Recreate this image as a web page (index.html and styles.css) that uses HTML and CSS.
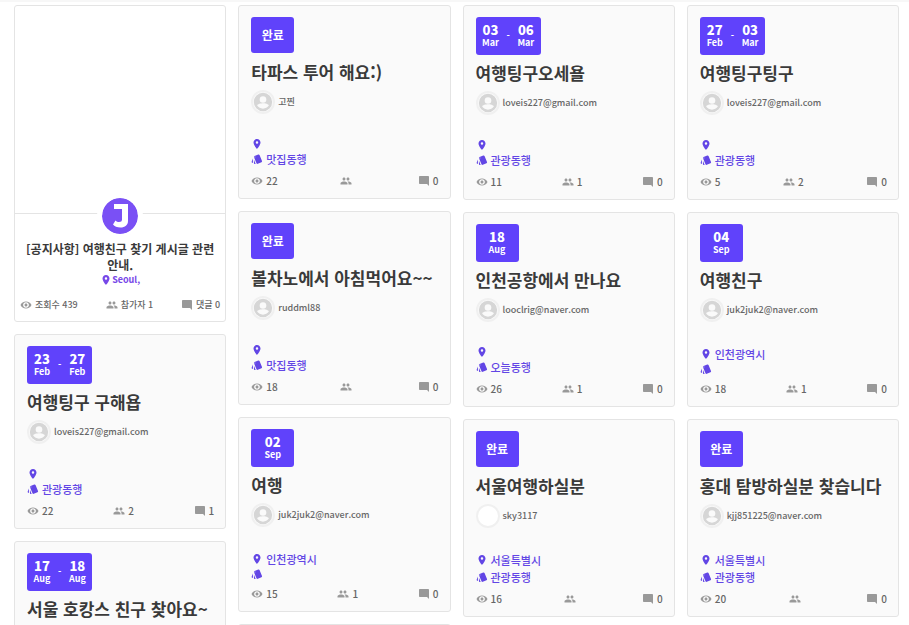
FILE: index.html
```html
<!DOCTYPE html>
<html lang="ko">
<head>
<meta charset="utf-8">
<title>여행친구 찾기</title>
<meta name="viewport" content="width=device-width, initial-scale=1">
<link rel="stylesheet" href="styles.css">
</head>
<body>
<svg class="sprite" aria-hidden="true">
  <symbol id="eye" viewBox="0 0 24 24"><path d="M12 5C7 5 2.730 7.900 1 12c1.730 4.100 6 7 11 7s9.270-2.900 11-7c-1.730-4.100-6-7-11-7zM12 17.500c-3.300 0-5.800-2.400-5.800-5.500S8.700 6.500 12 6.500s5.800 2.400 5.800 5.500-2.500 5.500-5.800 5.500zm0-8.500c-1.660 0-3 1.340-3 3s1.340 3 3 3 3-1.340 3-3-1.340-3-3-3z"/></symbol>
  <symbol id="people" viewBox="0 0 24 24"><path d="M16 11c1.660 0 2.990-1.340 2.990-3S17.660 5 16 5s-3 1.340-3 3 1.340 3 3 3zm-8 0c1.660 0 2.990-1.340 2.990-3S9.660 5 8 5 5 6.340 5 8s1.340 3 3 3zm0 2c-2.330 0-7 1.170-7 3.500V19h14v-2.500C15 14.170 10.330 13 8 13zm8 0c-.29 0-.62.02-.97.05C16.190 13.890 17 15.020 17 16.500V19h6v-2.500c0-2.330-4.670-3.500-7-3.500z"/></symbol>
  <symbol id="comment" viewBox="0 0 24 24"><path d="M22 4c0-1.100-.9-2-2-2H4c-1.100 0-2 .9-2 2v12c0 1.100.9 2 2 2h14l4 4z"/></symbol>
  <symbol id="place" viewBox="0 0 24 24"><path d="M12 2C8.130 2 5 5.130 5 9c0 5.250 7 13 7 13s7-7.750 7-13c0-3.870-3.130-7-7-7zm0 9.500a2.500 2.500 0 0 1 0-5 2.500 2.500 0 0 1 0 5z"/></symbol>
  <symbol id="style" viewBox="0 0 24 24"><path d="M2.530 19.650l1.340.56v-9.030l-2.430 5.860c-.41 1.020.08 2.190 1.090 2.610zm19.500-3.700L17.070 3.980c-.31-.75-1.040-1.210-1.810-1.230-.26 0-.53.04-.79.15L7.100 5.950c-.75.31-1.210 1.030-1.230 1.800-.01.27.04.54.15.8l4.960 11.970c.31.76 1.050 1.220 1.830 1.230.26 0 .52-.05.77-.15l7.360-3.050c1.020-.42 1.510-1.590 1.090-2.600zM7.880 8.750c-.55 0-1-.45-1-1s.45-1 1-1 1 .45 1 1-.45 1-1 1zm-2 11c0 1.100.9 2 2 2h1.450l-3.450-8.340v6.340z"/></symbol>
  <symbol id="person" viewBox="0 0 24 24"><path d="M12 1a11 11 0 1 0 0 22 11 11 0 0 0 0-22zm0 4a4 4 0 1 1 0 8 4 4 0 0 1 0-8zM12 20c-2.900 0-5.400-1.400-7-3.700.1-1.800 4.700-2.800 7-2.800s6.900 1 7 2.800c-1.600 2.300-4.100 3.700-7 3.700z"/></symbol>
</svg>

<main class="board">
  <section class="column">
    <article class="card notice">
      <div class="cover"></div>
      <svg class="logo" viewBox="0 0 36 36" role="img" aria-label="J"><circle cx="18" cy="18" r="18"/><path d="M12 6h14v17c0 4-3 6.500-7.500 6.500-3.500 0-6-1-7.500-3l2.500-4c1 1 2.300 1.500 3.500 1.500 2 0 3-.8 3-2.500V11h-8z"/></svg>
      <h2 class="notice-title"><a href="#">[공지사항] 여행친구 찾기 게시글 관련 안내.</a></h2>
      <p class="notice-place"><svg class="icon"><use href="#place"/></svg>Seoul,</p>
      <div class="stats"><span><svg class="icon"><use href="#eye"/></svg>조회수 439</span><span><svg class="icon"><use href="#people"/></svg>참가자 1</span><span><svg class="icon"><use href="#comment"/></svg>댓글 0</span></div>
    </article>
    <article class="card">
      <div class="badge"><span class="date"><b>23</b>Feb</span><span>-</span><span class="date"><b>27</b>Feb</span></div>
      <h2 class="title"><a href="#">여행팅구 구해욥</a></h2>
      <div class="user"><span class="avatar"><svg><use href="#person"/></svg></span>loveis227@gmail.com</div>
      <div class="tag empty"><svg class="icon"><use href="#place"/></svg></div>
      <div class="tag"><svg class="icon"><use href="#style"/></svg>관광동행</div>
      <div class="stats"><span><svg class="icon"><use href="#eye"/></svg>22</span><span><svg class="icon"><use href="#people"/></svg>2</span><span><svg class="icon"><use href="#comment"/></svg>1</span></div>
    </article>
    <article class="card">
      <div class="badge"><span class="date"><b>17</b>Aug</span><span>-</span><span class="date"><b>18</b>Aug</span></div>
      <h2 class="title"><a href="#">서울 호캉스 친구 찾아요~</a></h2>
    </article>
  </section>

  <section class="column">
    <article class="card">
      <div class="badge done">완료</div>
      <h2 class="title"><a href="#">타파스 투어 해요:)</a></h2>
      <div class="user"><span class="avatar"><svg><use href="#person"/></svg></span>고찐</div>
      <div class="tag empty"><svg class="icon"><use href="#place"/></svg></div>
      <div class="tag"><svg class="icon"><use href="#style"/></svg>맛집동행</div>
      <div class="stats"><span><svg class="icon"><use href="#eye"/></svg>22</span><span><svg class="icon"><use href="#people"/></svg></span><span><svg class="icon"><use href="#comment"/></svg>0</span></div>
    </article>
    <article class="card">
      <div class="badge done">완료</div>
      <h2 class="title"><a href="#">볼차노에서 아침먹어요~~</a></h2>
      <div class="user"><span class="avatar"><svg><use href="#person"/></svg></span>ruddml88</div>
      <div class="tag empty"><svg class="icon"><use href="#place"/></svg></div>
      <div class="tag"><svg class="icon"><use href="#style"/></svg>맛집동행</div>
      <div class="stats"><span><svg class="icon"><use href="#eye"/></svg>18</span><span><svg class="icon"><use href="#people"/></svg></span><span><svg class="icon"><use href="#comment"/></svg>0</span></div>
    </article>
    <article class="card">
      <div class="badge"><span class="date"><b>02</b>Sep</span></div>
      <h2 class="title"><a href="#">여행</a></h2>
      <div class="user"><span class="avatar"><svg><use href="#person"/></svg></span>juk2juk2@naver.com</div>
      <div class="tag"><svg class="icon"><use href="#place"/></svg>인천광역시</div>
      <div class="tag empty"><svg class="icon"><use href="#style"/></svg></div>
      <div class="stats"><span><svg class="icon"><use href="#eye"/></svg>15</span><span><svg class="icon"><use href="#people"/></svg>1</span><span><svg class="icon"><use href="#comment"/></svg>0</span></div>
    </article>
    <article class="card"></article>
  </section>

  <section class="column">
    <article class="card">
      <div class="badge"><span class="date"><b>03</b>Mar</span><span>-</span><span class="date"><b>06</b>Mar</span></div>
      <h2 class="title"><a href="#">여행팅구오세욜</a></h2>
      <div class="user"><span class="avatar"><svg><use href="#person"/></svg></span>loveis227@gmail.com</div>
      <div class="tag empty"><svg class="icon"><use href="#place"/></svg></div>
      <div class="tag"><svg class="icon"><use href="#style"/></svg>관광동행</div>
      <div class="stats"><span><svg class="icon"><use href="#eye"/></svg>11</span><span><svg class="icon"><use href="#people"/></svg>1</span><span><svg class="icon"><use href="#comment"/></svg>0</span></div>
    </article>
    <article class="card">
      <div class="badge"><span class="date"><b>18</b>Aug</span></div>
      <h2 class="title"><a href="#">인천공항에서 만나요</a></h2>
      <div class="user"><span class="avatar"><svg><use href="#person"/></svg></span>looclrig@naver.com</div>
      <div class="tag empty"><svg class="icon"><use href="#place"/></svg></div>
      <div class="tag"><svg class="icon"><use href="#style"/></svg>오늘동행</div>
      <div class="stats"><span><svg class="icon"><use href="#eye"/></svg>26</span><span><svg class="icon"><use href="#people"/></svg>1</span><span><svg class="icon"><use href="#comment"/></svg>0</span></div>
    </article>
    <article class="card">
      <div class="badge done">완료</div>
      <h2 class="title"><a href="#">서울여행하실분</a></h2>
      <div class="user"><span class="avatar blank"></span>sky3117</div>
      <div class="tag"><svg class="icon"><use href="#place"/></svg>서울특별시</div>
      <div class="tag"><svg class="icon"><use href="#style"/></svg>관광동행</div>
      <div class="stats"><span><svg class="icon"><use href="#eye"/></svg>16</span><span><svg class="icon"><use href="#people"/></svg></span><span><svg class="icon"><use href="#comment"/></svg>0</span></div>
    </article>
  </section>

  <section class="column">
    <article class="card">
      <div class="badge"><span class="date"><b>27</b>Feb</span><span>-</span><span class="date"><b>03</b>Mar</span></div>
      <h2 class="title"><a href="#">여행팅구팅구</a></h2>
      <div class="user"><span class="avatar"><svg><use href="#person"/></svg></span>loveis227@gmail.com</div>
      <div class="tag empty"><svg class="icon"><use href="#place"/></svg></div>
      <div class="tag"><svg class="icon"><use href="#style"/></svg>관광동행</div>
      <div class="stats"><span><svg class="icon"><use href="#eye"/></svg>5</span><span><svg class="icon"><use href="#people"/></svg>2</span><span><svg class="icon"><use href="#comment"/></svg>0</span></div>
    </article>
    <article class="card">
      <div class="badge"><span class="date"><b>04</b>Sep</span></div>
      <h2 class="title"><a href="#">여행친구</a></h2>
      <div class="user"><span class="avatar"><svg><use href="#person"/></svg></span>juk2juk2@naver.com</div>
      <div class="tag"><svg class="icon"><use href="#place"/></svg>인천광역시</div>
      <div class="tag empty"><svg class="icon"><use href="#style"/></svg></div>
      <div class="stats"><span><svg class="icon"><use href="#eye"/></svg>18</span><span><svg class="icon"><use href="#people"/></svg>1</span><span><svg class="icon"><use href="#comment"/></svg>0</span></div>
    </article>
    <article class="card">
      <div class="badge done">완료</div>
      <h2 class="title"><a href="#">홍대 탐방하실분 찾습니다</a></h2>
      <div class="user"><span class="avatar"><svg><use href="#person"/></svg></span>kjj851225@naver.com</div>
      <div class="tag"><svg class="icon"><use href="#place"/></svg>서울특별시</div>
      <div class="tag"><svg class="icon"><use href="#style"/></svg>관광동행</div>
      <div class="stats"><span><svg class="icon"><use href="#eye"/></svg>20</span><span><svg class="icon"><use href="#people"/></svg></span><span><svg class="icon"><use href="#comment"/></svg>0</span></div>
    </article>
  </section>
</main>
</body>
</html>
```
FILE: styles.css
```css
* { box-sizing: border-box; }

body {
  margin: 0;
  background: #fff;
  color: #666;
  font-family: "Noto Sans CJK KR", sans-serif;
  font-weight: 500;
}

a { color: inherit; text-decoration: none; }

.sprite { display: none; }

.board {
  display: grid;
  grid-template-columns: repeat(4, minmax(0, 1fr));
  gap: 12px;
  height: 100vh;
  padding: 3px 10px 0 14px;
  border-top: 2px solid #f7f7f7;
  overflow: hidden;
}

.column {
  display: flex;
  flex-direction: column;
  gap: 12px;
  min-height: 0;
}

.card {
  flex: none;
  padding: 11px 11px 9px 12px;
  border: 1px solid #e4e4e4;
  border-radius: 3px;
  background: #fafafa;
}

.badge {
  display: flex;
  align-items: center;
  justify-content: center;
  gap: 7px;
  width: fit-content;
  min-width: 43px;
  height: 38px;
  margin-bottom: 5px;
  padding: 0 6px;
  border-radius: 3px;
  background: #6042fb;
  color: #fff;
  font-size: 9px;
  font-weight: 700;
  line-height: 12px;
}

.badge.done {
  height: 36px;
  margin-bottom: 6px;
  font-size: 12px;
}

.date {
  display: flex;
  flex-direction: column;
  align-items: center;
  min-width: 18px;
}

.date b { font-size: 13px; line-height: 14px; }

.title {
  margin: 0 0 6px;
  color: #3a3a3a;
  font-size: 17px;
  font-weight: 700;
  line-height: 25px;
  white-space: nowrap;
}

.user {
  display: flex;
  align-items: center;
  gap: 3px;
  margin-bottom: 23px;
  font-size: 9px;
  line-height: 24px;
}

.avatar {
  width: 24px;
  height: 24px;
  border: 2px solid #f0f0f0;
  border-radius: 50%;
  background: #fafafa;
}

.avatar.blank { background: #fff; }

.avatar svg {
  display: block;
  width: 20px;
  height: 20px;
  fill: #d6d6d6;
}

.icon {
  flex: none;
  width: 12px;
  height: 12px;
  margin-right: 3px;
  fill: currentColor;
}

.tag {
  display: flex;
  align-items: center;
  height: 17px;
  color: #6246e5;
  font-size: 11px;
  line-height: 16px;
}

.tag.empty { height: 13px; }

.stats {
  display: flex;
  justify-content: space-between;
  margin-top: 6px;
  font-size: 10px;
  line-height: 16px;
}

.stats span {
  display: flex;
  align-items: center;
}

.stats .icon { fill: #999; }

.notice {
  display: flex;
  flex-direction: column;
  align-items: center;
  padding: 0 5px 8px 5px;
  background: #fff;
}

.cover {
  align-self: stretch;
  height: 208px;
  margin: 0 -5px;
  border-bottom: 1px solid #e4e4e4;
}

.logo {
  width: 46px;
  height: 46px;
  margin-top: -21px;
  padding: 5px;
  border-radius: 50%;
  background: #fff;
  fill: #7a50f5;
}

.logo path { fill: #fff; }

.notice-title {
  margin: 2px 0 0;
  color: #3a3a3a;
  font-size: 12px;
  font-weight: 700;
  line-height: 16px;
  text-align: center;
}

.notice-place {
  display: flex;
  align-items: center;
  margin: 0;
  color: #7748e8;
  font-size: 9px;
  font-weight: 700;
  line-height: 14px;
}

.notice-place .icon { margin-right: 0; }

.notice .stats {
  align-self: stretch;
  margin-top: 10px;
  font-size: 9px;
}
```
